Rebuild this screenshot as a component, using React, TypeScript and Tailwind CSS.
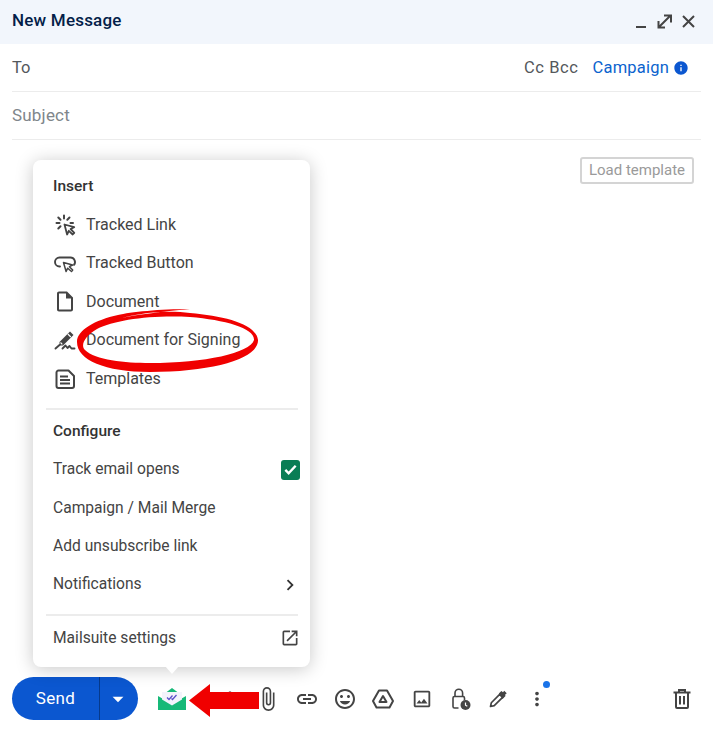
import type { ReactNode } from 'react';
import {
  MdAttachFile,
  MdChevronRight,
  MdInfo,
  MdInsertEmoticon,
  MdLink,
  MdMoreVert,
  MdOpenInNew,
  MdOutlineImage,
  MdOutlineInsertDriveFile,
  MdArrowDropDown,
  MdFormatColorText,
} from 'react-icons/md';

const font = "font-['Roboto',sans-serif]";

const TrackedLinkIcon = () => (
  <svg viewBox="0 0 24 24" className="w-[24px] h-[24px]" fill="none" stroke="#444" strokeWidth="1.8" strokeLinecap="round" strokeLinejoin="round">
    <path d="M11.500 11.500l2.600 10 1.700-3.700 3.900 3.700 1.600-1.700-3.700-3.800 3.600-1.800z" />
    <path d="M11 2.500v3M3.500 10h3M5.300 4.500l2.200 2.200M16.500 4.500l-2.200 2.200M5.300 15.500l2.200-2.200M17.500 10h2.500" strokeWidth="2" />
  </svg>
);

const TrackedButtonIcon = () => (
  <svg viewBox="0 0 24 24" className="w-[24px] h-[24px]" fill="none" stroke="#444" strokeWidth="1.9" strokeLinecap="round" strokeLinejoin="round">
    <path d="M7 15.500H6.500a4.500 4.500 0 0 1 0-9h11a4.500 4.500 0 0 1 3.500 7.300" />
    <path d="M10.500 11.500l2.600 9 1.600-3.300 3.800 3.300 1.200-1.400-3.300-3.400 3.200-1.700z" strokeWidth="1.500" />
  </svg>
);

const SignIcon = () => (
  <svg viewBox="0 0 24 24" className="w-[24px] h-[24px]" fill="none">
    <path d="M17 3.500l3.500 3.500-10.500 10.500H6.500V14z" fill="#444" />
    <path d="M14.800 6l3 3" stroke="#fff" strokeWidth="1.100" />
    <path d="M7.500 14.500l1.800 1.800" stroke="#fff" strokeWidth="1.100" />
    <path d="M2.500 20.500l4-3.500M9.500 20.500l3-3 2 2.500 2-2 2 2.500h3" stroke="#444" strokeWidth="1.900" strokeLinecap="round" strokeLinejoin="round" />
  </svg>
);

const TemplateIcon = () => (
  <svg viewBox="0 0 24 24" className="w-[24px] h-[24px]" fill="none" stroke="#444" strokeWidth="2" strokeLinejoin="round">
    <path d="M5.500 3.500h10L21 9v10a2 2 0 0 1-2 2H5.500a2 2 0 0 1-2-2V5.500a2 2 0 0 1 2-2z" />
    <path d="M7 9.500h8M7 13h10M7 16.500h10" strokeWidth="1.800" />
  </svg>
);

const DriveIcon = () => (
  <svg viewBox="0 0 24 24" className="w-[24px] h-[24px]" fill="none" stroke="#444" strokeWidth="2" strokeLinejoin="round">
    <path d="M8 3.500h8l6 10.500-3.500 6.500h-13L2 14z" />
    <path d="M12 9l3.500 6h-7z" />
  </svg>
);

const LockClockIcon = () => (
  <svg viewBox="0 0 24 24" className="w-[24px] h-[24px]" fill="none">
    <path d="M10.500 21H6.500A1.500 1.500 0 0 1 5 19.500V11a1.500 1.500 0 0 1 1.500-1.500h8.500A1.500 1.500 0 0 1 16.500 11v2" stroke="#444" strokeWidth="1.600" />
    <path d="M7 9.500V6a3.800 3.800 0 0 1 7.600 0v3.500" stroke="#444" strokeWidth="1.600" />
    <circle cx="17.500" cy="18" r="5" fill="#444" />
    <path d="M17.500 15.500v2.700l1.800 1" stroke="#fff" strokeWidth="1.200" />
  </svg>
);

const PenIcon = () => (
  <svg viewBox="0 0 24 24" className="w-[20px] h-[20px]" fill="none">
    <path d="M3 21l1-4.500L14 6.500l3.500 3.500-10 10z" stroke="#444" strokeWidth="2" strokeLinejoin="round" />
    <path d="M13 5.500l3-3 2 1.500 1.500-2 3 3-2 2 .5 1.500-3.500 3.500z" fill="#444" />
  </svg>
);

const TrashIcon = () => (
  <svg viewBox="0 0 24 24" className="w-[24px] h-[24px]" fill="none" stroke="#444" strokeWidth="2">
    <path d="M3.500 5.500h17M9 5.500V3h6v2.500" />
    <path d="M6 5.500V20a1 1 0 0 0 1 1h10a1 1 0 0 0 1-1V5.500" />
    <path d="M10 9v8.500M14 9v8.500" />
  </svg>
);

const MailsuiteIcon = () => (
  <svg viewBox="0 0 28 22" className="w-[28px] h-[22px] shrink-0">
    <path d="M14 0l6 4.500H8z" fill="#17b978" />
    <path d="M0 8l14 8 14-8v14H0z" fill="#17b978" />
    <path d="M4 4h20v7.500l-10 6-10-6z" fill="#f3f3fb" />
    <path d="M9 9.500l2 2 3.500-4M13.500 10.500l1 1 4-4.500" fill="none" stroke="#5b4fc9" strokeWidth="1.300" />
  </svg>
);

const MenuRow = ({ icon, children, right }: { icon?: ReactNode; children: ReactNode; right?: ReactNode }) => (
  <div className={`flex items-center h-[38.4px] pl-[20px] pr-[10px] text-[#444] ${icon ? 'text-[16px]' : 'text-[15.6px]'}`}>
    {icon && <span className="w-[24px] h-[24px] mr-[9px] flex items-center justify-center shrink-0">{icon}</span>}
    <span className="flex-1">{children}</span>
    {right}
  </div>
);

const ToolIcon = ({ children, dot }: { children: ReactNode; dot?: boolean }) => (
  <span className="relative w-[38.3px] h-[38px] flex items-center justify-center shrink-0">
    {children}
    {dot && <span className="absolute top-[1px] right-[6px] w-[7px] h-[7px] rounded-full bg-[#1a73e8]" />}
  </span>
);

export default function App() {
  return (
    <div className={`relative w-[713px] h-[732px] bg-white flex flex-col overflow-hidden ${font}`}>
      <header className="h-[44px] shrink-0 bg-[#f2f6fc] flex items-center justify-between pl-[12px] pr-[18px] pb-[2px]">
        <span className="text-[17px] font-medium tracking-[0.2px] text-[#041e49]">New Message</span>
        <svg viewBox="0 0 60 16" className="w-[60px] h-[16px]" fill="none" stroke="#444" strokeWidth="2">
          <path d="M1 14h10" />
          <path d="M24 14l11-11M29 2.500h7v7M30 14.500h-6.500V8" />
          <path d="M48 3l11 11M59 3L48 14" />
        </svg>
      </header>

      <div className="mx-[12px] h-[48px] shrink-0 pt-[1px] border-b border-[#ececec] flex items-center justify-between text-[16.500px]">
        <span className="text-[#54585c]">To</span>
        <div className="flex items-center pr-[5px] mr-[7px]">
          <span className="text-[#54585c] tracking-[0.6px]">Cc Bcc</span>
          <span className="text-[#0b63ce] ml-[14px] tracking-[0.2px]">Campaign</span>
          <MdInfo size={16} className="text-[#0b57d0] ml-[4px]" />
        </div>
      </div>

      <div className="mx-[12px] h-[48px] shrink-0 pt-[1px] border-b border-[#ececec] flex items-center text-[17px] tracking-[0.2px] text-[#80868b]">
        Subject
      </div>

      <div className="flex-1 flex justify-end items-start px-[19px] pt-[17px]">
        <button className="h-[27px] w-[114px] border-2 border-[#d4d4d4] rounded-[3px] text-[15px] text-[#9a9a9a]">Load template</button>
      </div>

      <footer className="h-[43px] shrink-0 mb-[12px] px-[12px] flex items-center">
        <div className="w-[126px] h-[43px] rounded-full bg-[#0b57d0] flex items-center text-white shrink-0">
          <span className="w-[87px] text-center text-[17px] tracking-[0.3px]">Send</span>
          <span className="w-[1px] h-[43px] bg-[#063a8c]" />
          <MdArrowDropDown size={26} className="ml-[5px]" />
        </div>
        <span className="w-[20px] shrink-0" />
        <MailsuiteIcon />
        <div className="flex items-center ml-[25px] text-[#444]">
          <ToolIcon><MdFormatColorText size={20} /></ToolIcon>
          <ToolIcon><MdAttachFile size={26} /></ToolIcon>
          <ToolIcon><MdLink size={24} /></ToolIcon>
          <ToolIcon><MdInsertEmoticon size={24} /></ToolIcon>
          <ToolIcon><DriveIcon /></ToolIcon>
          <ToolIcon><MdOutlineImage size={22} /></ToolIcon>
          <ToolIcon><LockClockIcon /></ToolIcon>
          <ToolIcon><PenIcon /></ToolIcon>
          <ToolIcon dot><MdMoreVert size={22} /></ToolIcon>
        </div>
        <span className="flex-1" />
        <span className="w-[38px] flex justify-center"><TrashIcon /></span>
      </footer>

      {/* popup over the compose body */}
      <div className="absolute left-[33px] top-[160px] w-[277px] h-[507px] bg-white rounded-[8px] shadow-[0_2px_18px_rgba(0,0,0,0.22)] pt-[7.5px]">
        <div className="h-[38.4px] pl-[20px] flex items-center text-[15.500px] font-medium text-[#333]">Insert</div>
        <MenuRow icon={<TrackedLinkIcon />}>Tracked Link</MenuRow>
        <MenuRow icon={<TrackedButtonIcon />}>Tracked Button</MenuRow>
        <MenuRow icon={<MdOutlineInsertDriveFile size={25} />}>Document</MenuRow>
        <MenuRow icon={<SignIcon />}>Document for Signing</MenuRow>
        <MenuRow icon={<TemplateIcon />}>Templates</MenuRow>
        <div className="h-[2px] ml-[13px] mr-[12px] mt-[10.5px] bg-[#ececec]" />
        <div className="h-[38.4px] mt-[2px] pl-[20px] flex items-center text-[15.500px] font-medium text-[#333]">Configure</div>
        <MenuRow
          right={
            <span className="w-[19px] h-[20px] rounded-[3px] bg-[#0a7d55] flex items-center justify-center">
              <svg viewBox="0 0 16 16" className="w-[15px] h-[15px]" fill="none" stroke="#fff" strokeWidth="2.600">
                <path d="M2.500 8.500l3.500 3.500 7.500-8" />
              </svg>
            </span>
          }
        >
          Track email opens
        </MenuRow>
        <MenuRow>Campaign / Mail Merge</MenuRow>
        <MenuRow>Add unsubscribe link</MenuRow>
        <MenuRow right={<MdChevronRight size={22} className="text-[#333] -mr-[1px]" />}>Notifications</MenuRow>
        <div className="h-[2px] ml-[13px] mr-[12px] mt-[10px] bg-[#ececec]" />
        <div className="mt-[3px]">
          <MenuRow right={<MdOpenInNew size={20} className="text-[#444]" />}>Mailsuite settings</MenuRow>
        </div>
        <div className="absolute left-[132px] bottom-[-7px] w-0 h-0 border-l-[7px] border-r-[7px] border-t-[8px] border-l-transparent border-r-transparent border-t-white" />
      </div>

      {/* red annotations drawn on the screenshot */}
      <svg className="absolute left-0 top-0 pointer-events-none" width="713" height="732" viewBox="0 0 713 732">
        <path
          d="M122 318 C150 311 172 311 190 313 C225 316 256 324 258 340 C259 358 215 372 150 372 C105 372 77 360 77 342 C77 330 95 320 118 315 C130 312 160 309 190 309 C160 312 140 314 122 318 Z M190 317 C150 315 115 320 97 329 C85 336 80 345 85 350 C95 360 125 363 150 363 C205 363 250 353 254 340 C255 328 225 320 190 317 Z"
          fill="#f00000"
          fillRule="evenodd"
        />
        <path d="M189 700.500 L210 684 V692 H259 V709 H210 V717 Z" fill="#f00000" />
      </svg>
    </div>
  );
}
